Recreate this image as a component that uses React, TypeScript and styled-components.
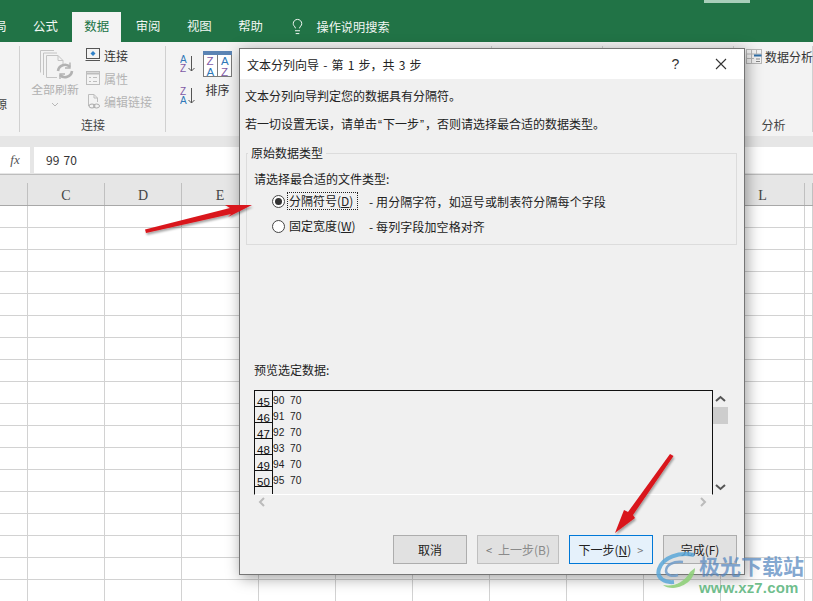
import React from "react";
import styled, { createGlobalStyle } from "styled-components";
import { Lightbulb } from "lucide-react";

const FONT = `"Noto Sans CJK SC", "Liberation Sans", sans-serif`;

const Global = createGlobalStyle`
  html, body { margin: 0; padding: 0; overflow: hidden; background: #fff; }
  * { box-sizing: border-box; }
`;

const Page = styled.div`
  position: relative; width: 813px; height: 601px; overflow: hidden;
  display: flex; flex-direction: column; font-family: ${FONT}; color: #222; background: #fff;
`;

/* ---------- title + tabs ---------- */
const Header = styled.div`background: #217346; height: 42px; display: flex; flex-direction: column; flex: none;`;
const TitleStrip = styled.div`height: 12px; display: flex; justify-content: flex-end; padding-right: 63px;`;
const TitleMark = styled.div`width: 46px; height: 3px; background: #a9cfba;`;
const TabList = styled.div`display: flex; height: 30px; margin-left: -55px; gap: 2.5px; align-items: stretch;`;
const Tab = styled.div<{ $active?: boolean }>`
  padding: 0 12px; font-size: 12.4px; line-height: 29px; white-space: nowrap;
  color: ${p => (p.$active ? "#217346" : "#f2f7f4")};
  background: ${p => (p.$active ? "#f3f3f3" : "transparent")};
`;
const Search = styled.div`
  display: flex; align-items: center; gap: 10px; margin-left: 12px; font-size: 12.2px; color: #f2f7f4;
  padding-bottom: 1px;
`;

/* ---------- ribbon ---------- */
const Ribbon = styled.div`height: 94px; background: #f3f3f3; display: flex; flex: none; padding-top: 4px;`;
const Group = styled.div<{ $w: number }>`
  width: ${p => p.$w}px; flex: none; height: 86px; border-right: 1px solid #d0d0d0;
  display: flex; flex-direction: column; position: relative; margin-right: 1px;
`;
const GroupBody = styled.div`flex: 1; display: flex; min-height: 0;`;
const GroupLabel = styled.div`height: 15px; text-align: center; font-size: 12px; line-height: 16px; color: #444;`;
const SourceText = styled.div`font-size: 12px; color: #444; margin: 49px 0 0 -5px;`;
const RefreshCol = styled.div`
  width: 63px; padding-left: 5px; flex: none; display: flex; flex-direction: column; align-items: center;
  font-size: 11.9px; white-space: nowrap; color: #b0b0b0; margin-top: 3px;
`;
const RefreshLabel = styled.div`line-height: 16px; margin-top: 1px;`;
const LinkList = styled.div`display: flex; flex-direction: column; gap: 3px; margin-top: -1px;`;
const LinkRow = styled.div<{ $off?: boolean }>`
  height: 20px; display: flex; align-items: center; gap: 3px; font-size: 12px; white-space: nowrap;
  color: ${p => (p.$off ? "#b4b4b4" : "#333")};
`;
const SortWrap = styled.div`display: flex; padding: 5px 0 0 13px; gap: 7px;`;
const SortSmall = styled.div`display: flex; flex-direction: column; gap: 14px; padding-top: 4px;`;
const SortBig = styled.div`display: flex; flex-direction: column; align-items: center; gap: 4px; font-size: 12px; color: #333;`;
const AnalysisRow = styled.div`display: flex; align-items: center; gap: 3px; padding: 1px 0 0 11px; font-size: 12px; color: #333; white-space: nowrap; height: 20px;`;

/* ---------- formula bar ---------- */
const FormulaBar = styled.div`
  height: 39px; background: #e6e6e6; display: flex; gap: 4px; padding: 11px 0 1px; flex: none;
  border-bottom: 1px solid #bdbdbd;
`;
const FxBox = styled.div`
  width: 30px; background: #fff; text-align: center; font: italic 13px/25px "Liberation Serif", serif; color: #555;
`;
const FormulaInput = styled.div`flex: 1; background: #fff; font-size: 12px; word-spacing: 1.5px; line-height: 26px; padding-left: 12px; color: #333;`;

/* ---------- sheet ---------- */
const COLS = "28px repeat(9, 77px) 84px 8px";
const ColHeader = styled.div`
  display: grid; grid-template-columns: ${COLS}; height: 31px; flex: none; background: #e6e6e6;
  border-bottom: 1px solid #a8a8a8;
`;
const ColCell = styled.div`
  border-right: 1px solid #c0c0c0; margin-top: 8px; text-align: center;
  font: 14px/25px "Liberation Serif", serif; color: #444; overflow: hidden;
`;
const Sheet = styled.div`display: grid; grid-template-columns: ${COLS}; grid-auto-rows: 22px; flex: none;`;
const Cell = styled.div`border-right: 1px solid #d2d2d2; border-bottom: 1px solid #d2d2d2;`;

/* ---------- dialog ---------- */
const Dialog = styled.div`
  position: absolute; left: 239px; top: 48px; width: 506px; height: 527px; background: #f0f0f0;
  border: 1px solid #757575; box-shadow: 2px 3px 14px rgba(0,0,0,.38);
  display: flex; flex-direction: column; font-size: 12px; color: #222;
`;
const DialogTitle = styled.div`
  height: 30px; flex: none; background: #fff; display: flex; align-items: center; padding: 0 0 0 7px;
  font-size: 12px; word-spacing: 1.5px;
`;
const TitleText = styled.div`flex: 1;`;
const HelpMark = styled.div`width: 46px; text-align: center; font: 14px "Liberation Sans", sans-serif; color: #333; padding-left: 1px;`;
const CloseMark = styled.div`width: 46px; display: flex; justify-content: center;`;
const Msg = styled.div<{ $top: number }>`margin: ${p => p.$top}px 0 0 5px; line-height: 18px; height: 18px; white-space: nowrap;`;
const Quote = styled.span`font-family: "Liberation Sans", sans-serif; padding: 0 1px;`;
const Field = styled.fieldset`
  margin: 13px 7px 0 6px; padding: 0 0 9px 7px; border: 1px solid #dcdcdc; min-width: 0;
`;
const FieldLegend = styled.legend`margin-left: -6px; padding: 0 3px; line-height: 14px;`;
const Hint = styled.div`margin-top: 10px; line-height: 18px;`;
const RadioRow = styled.div<{ $top: number }>`
  margin-top: ${p => p.$top}px; height: 18px; padding-left: 18px; display: flex; align-items: center; white-space: nowrap;
`;
const Radio = styled.span<{ $on?: boolean }>`
  width: 13px; height: 13px; border-radius: 50%; border: 1px solid #444; background: #fff; flex: none;
  display: flex; align-items: center; justify-content: center; margin-right: 2px;
  &::after { content: ""; width: 7px; height: 7px; border-radius: 50%; background: ${p => (p.$on ? "#333" : "transparent")}; }
`;
const RadioLabel = styled.span<{ $focus?: boolean }>`
  padding: 0 1px; height: 18px; line-height: 16px; width: 71px; flex: none; white-space: nowrap;
  border: 1px ${p => (p.$focus ? "dotted #222" : "solid transparent")};
`;
const RadioNote = styled.span`margin-left: 11px; letter-spacing: .1px;`;
const PreviewLabel = styled.div`margin: 116px 0 0 14px; line-height: 18px; height: 18px;`;
const PreviewRow = styled.div`display: flex; margin: 11px 0 0 14px; height: 105px;`;
const PreviewBox = styled.div`
  width: 459px; height: 105px; border: 1px solid #111; border-bottom: 1px solid #fff;
  display: flex; flex-direction: column; position: relative;
`;
const DataRow = styled.div`display: flex; height: 16px; flex: none;`;
const RowNo = styled.div`
  width: 18px; flex: none; border-right: 1px solid #111; border-bottom: 1px solid #111;
  font: 11.5px/22px "Liberation Sans", sans-serif; text-align: center; color: #111; overflow: hidden;
`;
const RowStub = styled.div`width: 18px; flex: 1; border-right: 1px solid #111; max-width: 18px;`;
const RowData = styled.div`font: 10.2px/20px "Liberation Sans", sans-serif; color: #222; white-space: pre;`;
const VScroll = styled.div`width: 15px; display: flex; flex-direction: column; align-items: center; padding: 5px 0 4px;`;
const Thumb = styled.div`width: 15px; height: 17px; background: #cdcdcd; margin-top: 4px;`;
const VSpacer = styled.div`flex: 1;`;
const HScroll = styled.div`display: flex; justify-content: space-between; margin: 1px 0 0 0; padding: 0 11px 0 18px; height: 14px; width: 478px;`;
const ButtonRow = styled.div`display: flex; justify-content: flex-end; gap: 10px; padding-right: 7px; margin-top: 25px;`;
const Btn = styled.div<{ $w: number; $primary?: boolean; $off?: boolean }>`
  width: ${p => p.$w}px; height: 29px; display: flex; align-items: center; justify-content: center; gap: 6px;
  white-space: nowrap;
  background: ${p => (p.$primary ? "#e5f1fb" : "#e1e1e1")};
  border: 1px solid ${p => (p.$primary ? "#0078d7" : p.$off ? "#bfbfbf" : "#adadad")};
  color: ${p => (p.$off ? "#8a8a8a" : "#222")};
`;
const Caret = styled.span`color: #777; font-size: 11px;`;

/* ---------- overlay ---------- */
const Overlay = styled.svg`position: absolute; left: 0; top: 0; pointer-events: none;`;
const Watermark = styled.div`
  position: absolute; left: 655px; top: 549px; width: 150px; display: flex; align-items: flex-start; gap: 2px;
  pointer-events: none;
`;
const WmText = styled.div`display: flex; flex-direction: column; margin-top: 3px;`;
const WmTitle = styled.div`
  font-size: 21px; line-height: 26px; font-weight: 700; color: rgba(84,134,190,.72); white-space: nowrap;
`;
const WmUrl = styled.div`
  font: 700 15px/15px "Liberation Sans", sans-serif; color: rgba(86,178,120,.85); margin: 2px 0 0 0; letter-spacing: .15px;
`;

/* ---------- icons ---------- */
const RefreshIcon = () => (
  <svg width="38" height="31" viewBox="0 0 38 31" fill="none" stroke="#c4c4c4" style={{ marginLeft: 6 }}>
    <path d="M1.5 23.5V1.5H15M4.5 26V4H18M7.5 28.5V6.5H19L24 11.5V17" />
    <path d="M19 6.500V11.500H24" />
    <path d="M7.500 28.500H18" />
    <path d="M19 22a7 7 0 0 1 12-4M33 22a7 7 0 0 1-12 4" stroke="#b2b2b2" strokeWidth="2.6" />
    <path d="M31 13.500V19H26M21 30V25H26" stroke="#b2b2b2" strokeWidth="1.4" />
  </svg>
);
const ConnectIcon = () => (
  <svg width="16" height="16" viewBox="0 0 16 16" fill="none" style={{ marginLeft: 1 }}>
    <rect x="1.500" y="1.500" width="13" height="10" stroke="#555" />
    <path d="M0.500 13.500H15" stroke="#555" />
    <path d="M8 4l2.500 2.500L8 9 5.500 6.500z" fill="#2f80c8" />
  </svg>
);
const PropsIcon = () => (
  <svg width="16" height="16" viewBox="0 0 16 16" fill="none" stroke="#bdbdbd" style={{ marginLeft: 1 }}>
    <rect x="1.500" y="1.500" width="13" height="13" />
    <path d="M1.500 3.500H14.500" strokeWidth="2" />
    <path d="M4 7.500h2M8 7.500h4M4 11.500h2M8 11.500h4" />
  </svg>
);
const EditLinkIcon = () => (
  <svg width="16" height="17" viewBox="0 0 16 17" fill="none" stroke="#bdbdbd" style={{ marginLeft: 1 }}>
    <path d="M3.500 13V1.500H9L12.500 5V9M9 1.500V5H12.500" />
    <ellipse cx="7" cy="13" rx="3" ry="2" stroke="#aaa" />
    <ellipse cx="11.500" cy="13" rx="3" ry="2" stroke="#aaa" />
  </svg>
);
const SortLetter = styled.text`font: 10px "Liberation Sans", sans-serif;`;
const SortSmallIcon = ({ top, bottom, tc, bc }: { top: string; bottom: string; tc: string; bc: string }) => (
  <svg width="16" height="18" viewBox="0 0 16 18" fill="none">
    <SortLetter x="0" y="8" fill={tc}>{top}</SortLetter>
    <SortLetter x="0" y="17" fill={bc}>{bottom}</SortLetter>
    <path d="M11.500 1V16M8.500 13l3 3 3-3" stroke="#555" />
  </svg>
);
const SortBigLetter = styled.text`font: 11.5px "Liberation Sans", sans-serif;`;
const SortBigIcon = () => (
  <svg width="29" height="26" viewBox="0 0 29 26" fill="none">
    <rect x="0.500" y="0.500" width="28" height="25" fill="#fff" stroke="#7a7a7a" />
    <rect x="0" y="0" width="29" height="4" fill="#5b84b4" />
    <path d="M14.500 4V26" stroke="#7a7a7a" />
    <SortBigLetter x="3.500" y="14" fill="#7f5aa5">Z</SortBigLetter>
    <SortBigLetter x="3.500" y="24.500" fill="#2f78b8">A</SortBigLetter>
    <SortBigLetter x="18" y="14" fill="#2f78b8">A</SortBigLetter>
    <SortBigLetter x="18" y="24.500" fill="#7f5aa5">Z</SortBigLetter>
  </svg>
);
const AnalysisIcon = () => (
  <svg width="16" height="15" viewBox="0 0 16 15" fill="none" stroke="#b8b8b8">
    <rect x="0.500" y="0.500" width="15" height="14" />
    <path d="M0.500 5H15.500M0.500 9.500H8M5.500 0.500V14.500M10.500 0.500V5" />
    <path d="M8 6.500H15.500" stroke="#2f6fa8" strokeWidth="2" />
    <path d="M10 10h4M10 12.500h4" stroke="#888" />
  </svg>
);
const Chevron = ({ d, stroke = "#555" }: { d: string; stroke?: string }) => (
  <svg width="11" height="8" viewBox="0 0 11 8" fill="none"><path d={d} stroke={stroke} strokeWidth="2" /></svg>
);
const SmallChevronDown = () => (
  <svg width="8" height="5" viewBox="0 0 8 5" fill="none" style={{ marginTop: 5 }}><path d="M1 1l3 3 3-3" stroke="#b8b8b8" /></svg>
);

const ROWS = Array.from({ length: 18 });
const COL_NAMES = ["", "C", "D", "E", "F", "G", "H", "I", "J", "K", "L", ""];
const DATA = [["45", "90  70"], ["46", "91  70"], ["47", "92  70"], ["48", "93  70"], ["49", "94  70"], ["50", "95  70"]];

export default function App() {
  return (
    <Page>
      <Global />
      <Header>
        <TitleStrip><TitleMark /></TitleStrip>
        <TabList>
          <Tab>页面布局</Tab>
          <Tab>公式</Tab>
          <Tab $active>数据</Tab>
          <Tab>审阅</Tab>
          <Tab>视图</Tab>
          <Tab>帮助</Tab>
          <Search>
            <Lightbulb size={17} strokeWidth={1.4} />
            <span>操作说明搜索</span>
          </Search>
        </TabList>
      </Header>

      <Ribbon>
        <Group $w={20}>
          <GroupBody><SourceText>源</SourceText></GroupBody>
        </Group>
        <Group $w={145}>
          <GroupBody>
            <RefreshCol>
              <RefreshIcon />
              <RefreshLabel>全部刷新</RefreshLabel>
              <SmallChevronDown />
            </RefreshCol>
            <LinkList>
              <LinkRow><ConnectIcon />连接</LinkRow>
              <LinkRow $off><PropsIcon />属性</LinkRow>
              <LinkRow $off><EditLinkIcon />编辑链接</LinkRow>
            </LinkList>
          </GroupBody>
          <GroupLabel>连接</GroupLabel>
        </Group>
        <Group $w={325}>
          <GroupBody>
            <SortWrap>
              <SortSmall>
                <SortSmallIcon top="A" bottom="Z" tc="#2f78b8" bc="#7f5aa5" />
                <SortSmallIcon top="Z" bottom="A" tc="#7f5aa5" bc="#2f78b8" />
              </SortSmall>
              <SortBig><SortBigIcon />排序</SortBig>
            </SortWrap>
          </GroupBody>
        </Group>
        <Group $w={110} />
        <Group $w={130} />
        <Group $w={78}>
          <GroupBody><AnalysisRow><AnalysisIcon />数据分析</AnalysisRow></GroupBody>
          <GroupLabel>分析</GroupLabel>
        </Group>
      </Ribbon>

      <FormulaBar>
        <FxBox>fx</FxBox>
        <FormulaInput>99 70</FormulaInput>
      </FormulaBar>

      <ColHeader>
        {COL_NAMES.map((c, i) => <ColCell key={i}>{c}</ColCell>)}
      </ColHeader>
      <Sheet>
        {ROWS.map((_, r) => COL_NAMES.map((_, c) => <Cell key={`${r}-${c}`} />))}
      </Sheet>

      <Dialog>
        <DialogTitle>
          <TitleText>文本分列向导 - 第 1 步，共 3 步</TitleText>
          <HelpMark>?</HelpMark>
          <CloseMark>
            <svg width="12" height="12" viewBox="0 0 12 12" fill="none"><path d="M1 1l10 10M11 1L1 11" stroke="#333" strokeWidth="1.1" /></svg>
          </CloseMark>
        </DialogTitle>
        <Msg $top={8}>文本分列向导判定您的数据具有分隔符。</Msg>
        <Msg $top={10}>若一切设置无误，请单击<Quote>“</Quote>下一步<Quote>”</Quote>，否则请选择最合适的数据类型。</Msg>
        <Field>
          <FieldLegend>原始数据类型</FieldLegend>
          <Hint>请选择最合适的文件类型:</Hint>
          <RadioRow $top={4}>
            <Radio $on />
            <RadioLabel $focus>分隔符号(<u>D</u>)</RadioLabel>
            <RadioNote>- 用分隔字符，如逗号或制表符分隔每个字段</RadioNote>
          </RadioRow>
          <RadioRow $top={7}>
            <Radio />
            <RadioLabel>固定宽度(<u>W</u>)</RadioLabel>
            <RadioNote>- 每列字段加空格对齐</RadioNote>
          </RadioRow>
        </Field>
        <PreviewLabel>预览选定数据:</PreviewLabel>
        <PreviewRow>
          <PreviewBox>
            {DATA.map(([n, v]) => (
              <DataRow key={n}>
                <RowNo>{n}</RowNo>
                <RowData>{v}</RowData>
              </DataRow>
            ))}
            <RowStub />
          </PreviewBox>
          <VScroll>
            <Chevron d="M1 6l4.500-4L10 6" />
            <Thumb />
            <VSpacer />
            <Chevron d="M1 2l4.500 4L10 2" />
          </VScroll>
        </PreviewRow>
        <HScroll>
          <svg width="8" height="12" viewBox="0 0 8 12" fill="none"><path d="M6 2L2 6l4 4" stroke="#bbb" strokeWidth="2" /></svg>
          <svg width="8" height="12" viewBox="0 0 8 12" fill="none"><path d="M2 2l4 4-4 4" stroke="#bbb" strokeWidth="2" /></svg>
        </HScroll>
        <ButtonRow>
          <Btn $w={74}>取消</Btn>
          <Btn $w={82} $off><Caret>&lt;</Caret><span>上一步(B)</span></Btn>
          <Btn $w={84} $primary><span>下一步(<u>N</u>)</span><Caret>&gt;</Caret></Btn>
          <Btn $w={74}>完成(F)</Btn>
        </ButtonRow>
      </Dialog>

      <Watermark>
        <svg width="42" height="42" viewBox="0 0 42 42" fill="none">
          <path d="M39 6C24 3 8 8 4 20c-3 9 6 14 15 13" stroke="#5aa7d8" strokeWidth="4" opacity=".85" />
          <path d="M28 13C18 12 11 16 11 22c0 4 6 6 12 4" stroke="#6f9bc9" strokeWidth="2.500" opacity=".85" />
          <path d="M40 19c0 10-9 19-22 20-4 0-8-1-10-3 10 2 21-2 27-13z" fill="#8fcf7a" opacity=".9" />
        </svg>
        <WmText>
          <WmTitle>极光下载站</WmTitle>
          <WmUrl>www.xz7.com</WmUrl>
        </WmText>
      </Watermark>

      <Overlay width="813" height="601" viewBox="0 0 813 601">
        <defs>
          <filter id="arrowShadow" x="-20%" y="-20%" width="140%" height="140%">
            <feDropShadow dx="1" dy="2" stdDeviation="1.200" floodColor="#000" floodOpacity=".35" />
          </filter>
        </defs>
        <g fill="#d9161c" filter="url(#arrowShadow)">
          <polygon points="145,229.500 146,233 231,214 228,217 252,205 225,205 230,208" />
          <polygon points="670,454 673.500,456 633,515 635,518 615,533 624,510 628,512" />
        </g>
      </Overlay>
    </Page>
  );
}
